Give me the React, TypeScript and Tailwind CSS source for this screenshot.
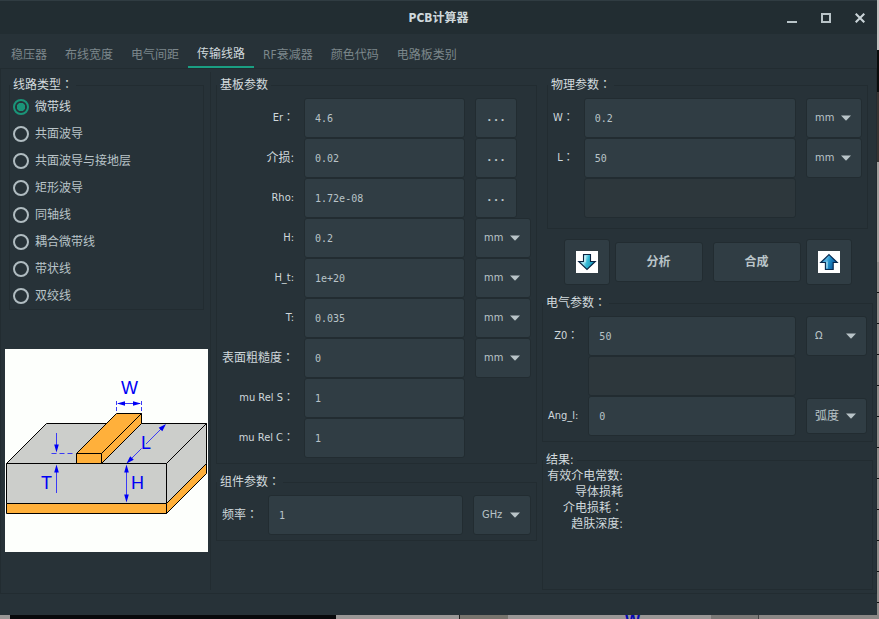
import { Fragment, type ReactNode } from 'react';

const LATIN = /^[\x20-\x7e]+：?$/;

/** Text whose trailing full-width colon is centred in its cell. */
function Caption({ text }: { text: string }) {
  if (!text.endsWith('：')) return <>{text}</>;
  return (
    <>
      {text.slice(0, -1)}
      <span className="font-['Noto_Sans_CJK_TC',sans-serif] leading-none">：</span>
    </>
  );
}

type GroupProps = { title: string; className?: string; bodyClass?: string; children: ReactNode };

function Group({ title, className = '', bodyClass = 'p-[5px]', children }: GroupProps) {
  return (
    <fieldset className={`min-w-0 border border-[#222c31] ${className}`}>
      <legend className="h-4 px-[3px] text-xs leading-4 text-[#d3dbde]">
        <Caption text={title} />
      </legend>
      <div className={bodyClass}>{children}</div>
    </fieldset>
  );
}

function FieldLabel({ id, text }: { id: string; text: string }) {
  const size = LATIN.test(text) ? 'text-[11px]' : 'text-xs';
  return (
    <label htmlFor={id} className={`text-right leading-4 whitespace-nowrap text-[#cfd8dc] ${size}`}>
      <Caption text={text} />
    </label>
  );
}

function Field({ id, value, disabled = false, label }: { id: string; value: string; disabled?: boolean; label?: string }) {
  return (
    <input
      id={id}
      type="text"
      defaultValue={value}
      disabled={disabled}
      aria-label={label}
      className="h-10 w-full min-w-0 rounded-[3px] border border-[#222c31] bg-[#303d44] px-2.5 font-['DejaVu_Sans_Mono',monospace] text-[10px] text-[#b9c4c8] outline-none disabled:bg-[#2d373c]"
    />
  );
}

function Unit({ label, options, height = 'h-10' }: { label: string; options: string[]; height?: string }) {
  const size = options[0] === '弧度' ? 'text-xs' : 'text-[11px]';
  return (
    <div className="relative w-full">
      <select
        aria-label={label}
        className={`block w-full appearance-none rounded-[3px] border border-[#222c31] bg-[#303d44] pl-2 text-[#b9c4c8] outline-none ${height} ${size}`}
      >
        {options.map((o) => (
          <option key={o}>{o}</option>
        ))}
      </select>
      <svg className="pointer-events-none absolute top-1/2 right-[11px] -mt-[3px] h-[6px] w-[10px]" viewBox="0 0 10 6" aria-hidden="true">
        <path d="M0 0.5h10L5 5.7z" fill="#b9c4c8" />
      </svg>
    </div>
  );
}

const LENGTH = ['mm', 'um', 'cm', 'inch', 'mil'];
const buttonLook = 'rounded-[3px] border border-[#222c31] bg-[#303d44] text-[#b9c4c8]';

const tabs = ['稳压器', '布线宽度', '电气间距', '传输线路', 'RF衰减器', '颜色代码', '电路板类别'];
const lineTypes = ['微带线', '共面波导', '共面波导与接地层', '矩形波导', '同轴线', '耦合微带线', '带状线', '双绞线'];

const substrate = [
  { id: 'er', text: 'Er：', value: '4.6', extra: 'more' },
  { id: 'tand', text: '介损:', value: '0.02', extra: 'more' },
  { id: 'rho', text: 'Rho:', value: '1.72e-08', extra: 'more' },
  { id: 'h', text: 'H:', value: '0.2', extra: 'unit' },
  { id: 'ht', text: 'H_t:', value: '1e+20', extra: 'unit' },
  { id: 't', text: 'T:', value: '0.035', extra: 'unit' },
  { id: 'rough', text: '表面粗糙度：', value: '0', extra: 'unit' },
  { id: 'murs', text: 'mu Rel S：', value: '1', extra: '' },
  { id: 'murc', text: 'mu Rel C：', value: '1', extra: '' },
];

function TitleBar() {
  const box = 'flex h-full w-[34px] items-center justify-center';
  return (
    <header className="grid h-[34px] grid-cols-[1fr_auto_1fr] items-center border-t border-[#303c42] bg-[#222d32]">
      <span />
      <h1 className="text-xs font-bold text-[#cfd8dc]">PCB计算器</h1>
      <div className="flex h-full justify-end">
        <button aria-label="最小化" className={box}>
          <svg width="10" height="10" viewBox="0 0 10 10"><path d="M0 9h10" stroke="#b9c4c8" strokeWidth="2" /></svg>
        </button>
        <button aria-label="最大化" className={box}>
          <svg width="10" height="10" viewBox="0 0 10 10"><rect x="1" y="1" width="8" height="8" fill="none" stroke="#b9c4c8" strokeWidth="2" /></svg>
        </button>
        <button aria-label="关闭" className={box}>
          <svg width="10" height="10" viewBox="0 0 10 10"><path d="M.7.7l8.6 8.6M9.3.7L.7 9.3" stroke="#c9d3d7" strokeWidth="2.1" /></svg>
        </button>
      </div>
    </header>
  );
}

function ArrowIcon({ up = false }: { up?: boolean }) {
  const id = up ? 'arrow-up' : 'arrow-down';
  return (
    <svg width="22" height="22" viewBox="0 0 22 22" aria-hidden="true">
      <defs>
        <linearGradient id={id} x1="0" y1="0" x2="1" y2="0.3">
          <stop offset="0" stopColor={up ? '#1673b5' : '#3f9fc4'} />
          <stop offset="0.42" stopColor={up ? '#58b4e0' : '#a5e4f2'} />
          <stop offset="0.6" stopColor={up ? '#1f8fc9' : '#35bad6'} />
          <stop offset="1" stopColor={up ? '#0b4f93' : '#128fb5'} />
        </linearGradient>
      </defs>
      <rect width="22" height="22" fill="#fff" />
      {up ? (
        <>
          <path d="M11 3.6l8.3 7.9h-4.1v7H7.4v-7H2.7z" fill={`url(#${id})`} stroke="#07274d" strokeWidth="1.1" />
          <path d="M9 10.5v7" stroke="#c7e9f6" />
        </>
      ) : (
        <>
          <path d="M7.5 3.5h7v7h4.8L11 18.5 2.7 10.5h4.8z" fill={`url(#${id})`} stroke="#0a2340" strokeWidth="1.1" />
          <path d="M9 5v6.5" stroke="#d4f3f9" />
        </>
      )}
    </svg>
  );
}

function Microstrip() {
  return (
    <svg className="mt-[39px] block h-auto w-full bg-[#fdfffc]" viewBox="0 0 203 203" role="img" aria-label="微带线">
      <g stroke="#000" strokeWidth="1" strokeLinejoin="round">
        <path d="M1.5 114.5l40-40h160l-40 40z" fill="#cccecb" />
        <path d="M1.5 114.5h160v40H1.5z" fill="#cccecb" />
        <path d="M161.5 114.5l40-40v40l-40 40z" fill="#cccecb" />
        <path d="M1.5 154.5h160v10H1.5z" fill="#ffb03b" />
        <path d="M161.5 154.5l40-40v10l-40 40z" fill="#ffb03b" />
        <path d="M71.5 104.5l40-40h25l-40 40z" fill="#ffb03b" />
        <path d="M71.5 104.5h25v10h-25z" fill="#ffb03b" />
        <path d="M96.5 104.5l40-40v10l-40 40z" fill="#ffb03b" />
      </g>
      <g stroke="#3a3af5" strokeWidth="1" fill="none">
        <path d="M111.5 52v12M136.5 52v12" strokeDasharray="4 2" />
        <path d="M46.5 104.5h21" strokeDasharray="5 3" />
        <path d="M113 54.5h22M51.5 84v17M51.5 118v26M121.5 118v33M124 112l12.5-12.5M141 95l17-17" />
      </g>
      <g fill="#0000f5">
        <path d="M112 54.5l8-2.3v4.6zM136 54.5l-8-2.3v4.6z" />
        <path d="M51.5 103.5l-2.3-8h4.6zM51.5 115.5l-2.3 8h4.6z" />
        <path d="M121.5 115.5l-2.3 8h4.6zM121.5 153.5l-2.3-8h4.6z" />
        <path d="M121.5 114.5l3.7-7.3 3.6 3.6zM161 75l-7.3 3.7 3.6 3.6z" />
      </g>
      <g className="font-['Liberation_Sans',Arial,sans-serif] text-[18px]" fill="#0000f5">
        <text x="116" y="45">W</text>
        <text x="136" y="100">L</text>
        <text x="36" y="140">T</text>
        <text x="126" y="140">H</text>
      </g>
    </svg>
  );
}

function LineTypePanel() {
  return (
    <section className="border-r border-[#222c31] pt-[5px] pr-0.5 pl-1">
      <Group title="线路类型：" className="mx-1" bodyClass="pl-[3px]">
        {lineTypes.map((name, i) => (
          <label key={name} className="flex h-[27px] items-center gap-1.5 text-xs text-[#b9c4c8]">
            <input
              type="radio"
              name="line-type"
              defaultChecked={i === 0}
              className="peer m-0 size-4 appearance-none rounded-full border-2 border-[#b0bcc1] checked:border-[#1a9579] checked:bg-[radial-gradient(circle,#1a9579_4px,transparent_4.5px)]"
            />
            <span className="peer-checked:text-[#cfd8dc]">{name}</span>
          </label>
        ))}
      </Group>
      <Microstrip />
    </section>
  );
}

function SubstratePanel() {
  return (
    <section className="flex flex-col gap-2.5 px-[5px] pt-[5px]">
      <Group title="基板参数">
        <div className="grid grid-cols-[auto_1fr_56px] items-center gap-x-2.5">
          {substrate.map((row) => (
            <Fragment key={row.id}>
              <FieldLabel id={row.id} text={row.text} />
              <Field id={row.id} value={row.value} />
              {row.extra === 'more' && (
                <button
                  aria-label={`选择 ${row.text}`}
                  className={`h-10 w-[42px] font-['DejaVu_Sans_Mono',monospace] text-[11px] font-bold ${buttonLook}`}
                >
                  ...
                </button>
              )}
              {row.extra === 'unit' && <Unit label={`${row.text} 单位`} options={LENGTH} />}
              {row.extra === '' && <span />}
            </Fragment>
          ))}
        </div>
      </Group>
      <Group title="组件参数：">
        <div className="grid grid-cols-[auto_1fr_58px] items-center gap-x-2.5">
          <FieldLabel id="freq" text="频率：" />
          <Field id="freq" value="1" />
          <Unit label="频率单位" options={['GHz', 'MHz', 'kHz']} />
        </div>
      </Group>
    </section>
  );
}

function ResultPanel() {
  return (
    <section className="flex flex-col gap-2.5 pt-[5px] pr-[3px]">
      <Group title="物理参数：" className="mx-[5px]" bodyClass="px-[5px] pt-[5px] pb-2.5">
        <div className="grid grid-cols-[auto_1fr_56px] items-center gap-x-2.5">
          <FieldLabel id="w" text="W：" />
          <Field id="w" value="0.2" />
          <Unit label="W 单位" options={LENGTH} />
          <FieldLabel id="l" text="L：" />
          <Field id="l" value="50" />
          <Unit label="L 单位" options={LENGTH} />
          <span />
          <Field id="phys3" value="" disabled label="物理参数 3" />
          <span />
        </div>
      </Group>
      <div className="flex items-center justify-center">
        <button aria-label="向下" className={`flex size-[46px] items-center justify-center ${buttonLook}`}><ArrowIcon /></button>
        <button className={`ml-[5px] h-10 w-[88px] text-xs font-bold ${buttonLook}`}>分析</button>
        <button className={`ml-2.5 h-10 w-[88px] text-xs font-bold ${buttonLook}`}>合成</button>
        <button aria-label="向上" className={`ml-[5px] flex size-[46px] items-center justify-center ${buttonLook}`}><ArrowIcon up /></button>
      </div>
      <Group title="电气参数：">
        <div className="grid grid-cols-[auto_1fr_61px] items-center gap-x-2.5">
          <FieldLabel id="z0" text="Z0：" />
          <Field id="z0" value="50" />
          <Unit label="Z0 单位" options={['Ω', 'kΩ']} />
          <span />
          <Field id="elec2" value="" disabled label="电气参数 2" />
          <span />
          <FieldLabel id="ang" text="Ang_l:" />
          <Field id="ang" value="0" />
          <Unit label="Ang_l 单位" options={['弧度', '度']} height="h-9" />
        </div>
      </Group>
      <Group title="结果:" className="flex-1" bodyClass="px-[5px]">
        <div className="flex w-[75px] flex-col items-end text-xs leading-4 whitespace-nowrap text-[#cfd8dc]">
          {['有效介电常数:', '导体损耗', '介电损耗：', '趋肤深度:'].map((t) => (
            <p key={t} className="h-4"><Caption text={t} /></p>
          ))}
        </div>
      </Group>
    </section>
  );
}

/** Slivers of the windows that lie behind the dialog. */
function BackdropRight() {
  return (
    <div className="flex w-0.5 flex-col bg-[#a3a09e]" aria-hidden="true">
      <div className="h-[50px] bg-[#c4c2c1]" />
      <div className="h-[42px] bg-[#0c0c0c]" />
      <div className="h-[70px] bg-[#3a3533]" />
      <div className="h-[100px]" />
      <div className="flex-1 bg-[repeating-linear-gradient(#8f8c8a_0px,#8f8c8a_30px,#111_30px,#111_31px)]" />
    </div>
  );
}

function BackdropBottom() {
  return (
    <div className="flex h-1 shrink-0 overflow-hidden bg-[#9a9796]" aria-hidden="true">
      <div className="w-2.5" />
      <div className="w-[326px] bg-[#08090b]" />
      <div className="w-[123px]" />
      <div className="w-px bg-[#222]" />
      <div className="w-12 bg-[#77746d]" />
      <div className="w-[203px] pl-[117px] font-['Liberation_Sans',Arial,sans-serif] text-base leading-3 font-bold text-[#0a0ab4]">W</div>
      <div className="w-[47px] bg-[#7a7876]" />
      <div className="w-px bg-[#444]" />
      <div className="flex-1 bg-[#8a8785]" />
    </div>
  );
}

export default function App() {
  return (
    <div className="flex min-h-screen flex-col bg-[#9a9796] font-['DejaVu_Sans_Condensed','DejaVu_Sans','Noto_Sans_CJK_SC',sans-serif]">
      <div className="flex flex-1">
        <main className="flex min-w-0 flex-1 flex-col bg-[#273238]">
          <TitleBar />
          <nav role="tablist" className="flex h-[34px] pl-0.5 text-xs">
            {tabs.map((t) => (
              <button
                key={t}
                role="tab"
                aria-selected={t === '传输线路'}
                className="border-b-2 border-transparent px-[9px] pt-2.5 whitespace-nowrap text-[#7c878b] aria-selected:border-[#1a9f83] aria-selected:pt-2 aria-selected:text-[#cfd8dc]"
              >
                {t}
              </button>
            ))}
          </nav>
          <div className="grid flex-1 grid-cols-[210px_331fr_334fr] border border-[#222c31] py-[3px]">
            <LineTypePanel />
            <SubstratePanel />
            <ResultPanel />
          </div>
          <footer className="h-[21px]" />
        </main>
        <BackdropRight />
      </div>
      <BackdropBottom />
    </div>
  );
}
